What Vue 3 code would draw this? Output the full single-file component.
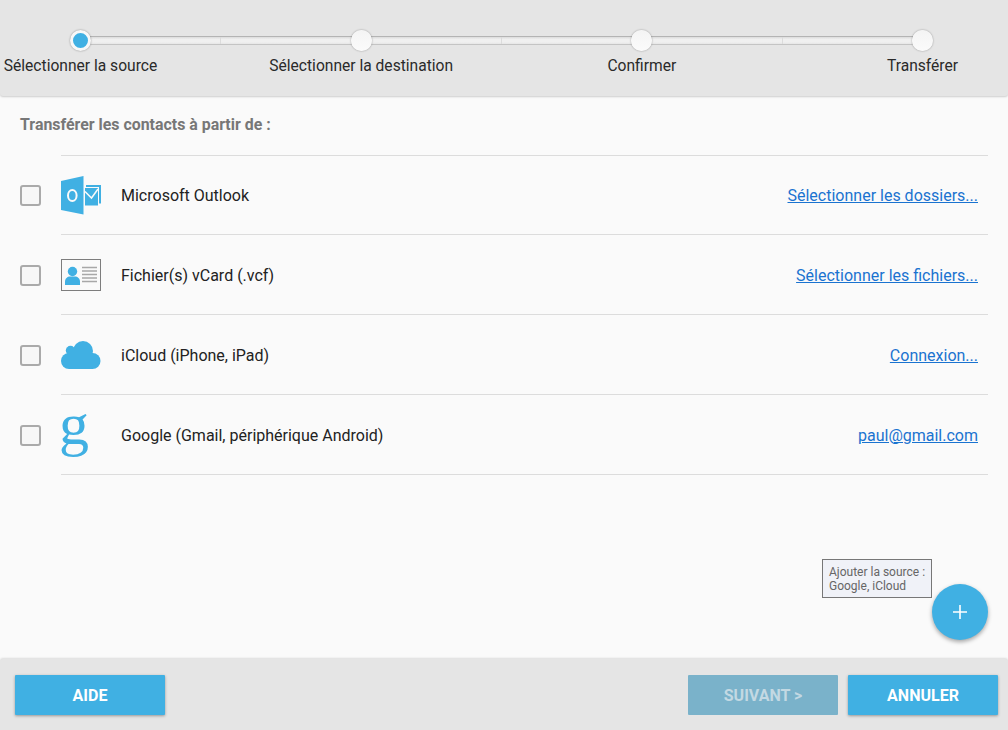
<script setup>
const steps = ['Sélectionner la source', 'Sélectionner la destination', 'Confirmer', 'Transférer']
const rows = [
  { id: 'outlook', name: 'Microsoft Outlook', action: 'Sélectionner les dossiers...' },
  { id: 'vcard', name: 'Fichier(s) vCard (.vcf)', action: 'Sélectionner les fichiers...' },
  { id: 'icloud', name: 'iCloud (iPhone, iPad)', action: 'Connexion...' },
  { id: 'google', name: 'Google (Gmail, périphérique Android)', action: 'paul@gmail.com' }
]
</script>

<template>
  <div class="app">
    <header class="head">
      <div class="stepper">
        <div class="track">
          <span class="tick t1"></span><span class="tick t2"></span><span class="tick t3"></span>
        </div>
        <div v-for="(s, i) in steps" :key="s" class="step">
          <span class="dot" :class="{ active: i === 0 }"></span>
          <span class="step-label">{{ s }}</span>
        </div>
      </div>
    </header>

    <main class="main">
      <h1 class="title">Transférer les contacts à partir de :</h1>
      <ul class="list">
        <li v-for="r in rows" :key="r.id" class="row">
          <span class="check"></span>
          <span class="icon">
            <svg v-if="r.id === 'outlook'" width="40" height="39" viewBox="0 0 40 39">
              <path d="M0 5 22.500 0v38.500L0 34z" fill="#40b0e3" />
              <rect x="25" y="9" width="15" height="18.500" fill="#40b0e3" />
              <rect x="23.500" y="11.500" width="14" height="18.500" fill="#40b0e3" stroke="#fafafa" stroke-width="1" />
              <path d="M24 15.500 30.500 22 37 13" fill="none" stroke="#fafafa" stroke-width="1.500" />
              <ellipse cx="11.300" cy="19.500" rx="4.300" ry="5.500" fill="none" stroke="#fafafa" stroke-width="2" />
            </svg>
            <svg v-else-if="r.id === 'vcard'" width="40" height="32" viewBox="0 0 40 32">
              <rect x="0.500" y="0.500" width="39" height="31" fill="#fafafa" stroke="#7d7d7d" />
              <circle cx="11.500" cy="12.500" r="4.700" fill="#40b0e3" />
              <path d="M4 26v-3.500c0-3 2.500-5 5-5h5c2.500 0 5 2 5 5V26z" fill="#40b0e3" />
              <path d="M21 8.500h15M21 12h15M21 15.500h15M21 19h15M21 22.500h15" stroke="#a8a8a8" stroke-width="1.400" />
            </svg>
            <svg v-else-if="r.id === 'icloud'" width="40" height="28" viewBox="0 0 40 28">
              <g fill="#40b0e3">
                <circle cx="8" cy="20" r="8" />
                <circle cx="9.500" cy="9.500" r="4.700" />
                <circle cx="22" cy="10" r="10" />
                <circle cx="31.500" cy="20" r="8" />
                <rect x="8" y="12" width="24" height="16" />
              </g>
            </svg>
            <span v-else class="g-logo">g</span>
          </span>
          <span class="name">{{ r.name }}</span>
          <a class="action" href="#">{{ r.action }}</a>
        </li>
      </ul>
      <div class="tip">Ajouter la source :<br />Google, iCloud</div>
      <button class="fab" type="button">
        <svg width="16" height="16" viewBox="0 0 16 16"><path d="M8 1v14M1 8h14" stroke="#fff" stroke-width="1.600" /></svg>
      </button>
    </main>

    <footer class="foot">
      <button class="btn" type="button">AIDE</button>
      <div class="foot-right">
        <button class="btn off" type="button">SUIVANT &gt;</button>
        <button class="btn" type="button">ANNULER</button>
      </div>
    </footer>
  </div>
</template>

<style>
html, body { margin: 0; background: #fafafa; }
</style>

<style scoped>
.app {
  width: 1008px;
  height: 730px;
  display: flex;
  flex-direction: column;
  overflow: hidden;
  background: #fafafa;
  font-family: Roboto, "Liberation Sans", sans-serif;
  color: #222;
}
.head {
  height: 96px;
  flex: none;
  background: #e5e5e5;
  box-shadow: 0 1px 2px rgba(0, 0, 0, 0.18);
  border-radius: 0 0 3px 3px;
  position: relative;
  z-index: 1;
}
.stepper {
  position: relative;
  width: 1003px;
  padding-top: 30px;
  display: flex;
  justify-content: space-between;
}
.track {
  position: absolute;
  left: 80px;
  top: 36px;
  width: 842px;
  height: 9px;
  box-sizing: border-box;
  border-top: 1px solid #b4b4b4;
  border-bottom: 1px solid #c4c4c4;
  background: linear-gradient(#dcdcdc 0, #f0f0f0 35%, #f0f0f0 70%, #e6e6e6 100%);
}
.tick { position: absolute; top: 0; bottom: 0; width: 1px; background: #dcdcdc; }
.t1 { left: 140px; }
.t2 { left: 421px; }
.t3 { left: 702px; }
.step {
  width: 161px;
  display: flex;
  flex-direction: column;
  align-items: center;
  position: relative;
}
.dot {
  width: 21px;
  height: 21px;
  box-sizing: border-box;
  border-radius: 50%;
  background: linear-gradient(#f4f4f4, #fbfbfb);
  box-shadow: 0 0 2px rgba(0, 0, 0, 0.4);
}
.dot.active {
  background: #40b0e3;
  border: 3.500px solid #f8f8f8;
}
.step-label {
  margin-top: 5px;
  font-size: 15.6px;
  line-height: 20px;
  white-space: nowrap;
  color: #2a2a2a;
}
.main {
  flex: 1;
  position: relative;
  min-height: 0;
}
.title {
  margin: 0;
  padding: 20px 0 0 20px;
  font-size: 15.9px;
  line-height: 18px;
  font-weight: 700;
  color: #777;
}
.list {
  list-style: none;
  margin: 21px 20px 0 0;
  padding: 0;
}
.row {
  position: relative;
  height: 80px;
  display: flex;
  align-items: center;
  padding-left: 20px;
  padding-right: 10px;
  box-sizing: border-box;
}
.row::before {
  content: "";
  position: absolute;
  left: 61px;
  right: 0;
  top: 0;
  height: 1px;
  background: #dcdcdc;
}
.row + .row::before { top: -1px; }
.row:last-child::after {
  content: "";
  position: absolute;
  left: 61px;
  right: 0;
  bottom: 0;
  height: 1px;
  background: #dcdcdc;
}
.check {
  width: 21px;
  height: 21px;
  box-sizing: border-box;
  border: 2px solid #aaa;
  border-radius: 3px;
  background: #f7f7f7;
  flex: none;
}
.icon {
  width: 40px;
  height: 40px;
  margin-left: 20px;
  flex: none;
  display: flex;
  align-items: center;
  justify-content: center;
}
.g-logo {
  font-family: "Liberation Serif", serif;
  font-size: 60px;
  line-height: 40px;
  color: #40b0e3;
  margin: -22px 14px 0 0;
}
.name {
  margin-left: 20px;
  flex: 1;
  font-size: 16px;
  color: #222;
}
.action {
  font-size: 16px;
  color: #1a73d0;
  text-decoration: underline;
}
.tip {
  position: absolute;
  left: 822px;
  top: 463px;
  width: 110px;
  height: 39px;
  box-sizing: border-box;
  padding: 5px 0 0 6px;
  border: 1px solid #777;
  background: #f0f2f8;
  font-size: 12px;
  line-height: 14px;
  color: #666;
  white-space: nowrap;
}
.fab {
  position: absolute;
  left: 932px;
  top: 488px;
  width: 56px;
  height: 56px;
  padding: 0;
  border: 0;
  border-radius: 50%;
  background: #40b0e3;
  box-shadow: 0 2px 4px rgba(0, 0, 0, 0.35);
  display: flex;
  align-items: center;
  justify-content: center;
}
.foot {
  height: 71px;
  flex: none;
  box-sizing: border-box;
  background: #e5e5e5;
  box-shadow: 0 -1px 2px rgba(0, 0, 0, 0.12);
  border-radius: 3px 3px 0 0;
  padding: 16px 10px 0 15px;
  display: flex;
  justify-content: space-between;
  align-items: flex-start;
  position: relative;
}
.foot-right { display: flex; gap: 10px; }
.btn {
  width: 150px;
  height: 40px;
  padding: 0;
  border: 0;
  border-radius: 1px;
  background: #40b0e3;
  color: #fff;
  font-family: Roboto, "Liberation Sans", sans-serif;
  font-size: 16px;
  font-weight: 700;
  box-shadow: 0 1px 3px rgba(0, 0, 0, 0.35);
}
.btn.off {
  background: #7ab2ca;
  color: #c3d9e3;
  box-shadow: none;
}
</style>
